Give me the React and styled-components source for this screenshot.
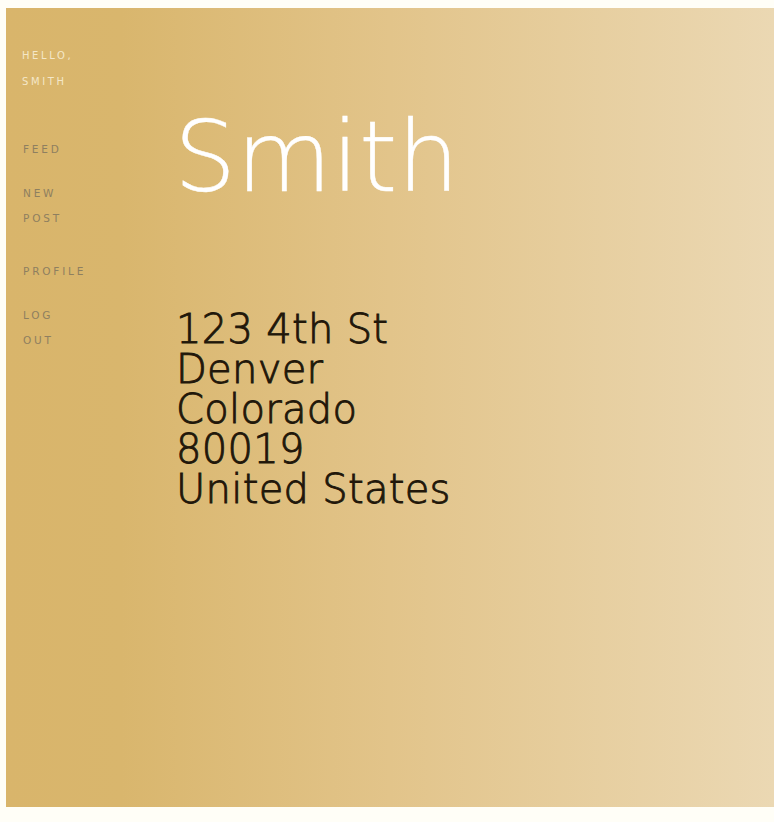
import React from "react";
import styled, { createGlobalStyle } from "styled-components";

const Global = createGlobalStyle`
  html, body { margin: 0; padding: 0; background: #fffef7; }
  body { padding: 8px 0 0 6px; font-family: "DejaVu Sans", "Liberation Sans", sans-serif; overflow: hidden; }
`;

const Page = styled.div`
  display: flex;
  height: 799px;
  background: linear-gradient(to right, #d9b56b 0%, #d9b66d 15%, #e2c48a 50%, #ebd8b3 100%);
`;

const Sidebar = styled.nav`
  width: 76px;
  flex: none;
  padding: 35px 0 0 16px;
  box-sizing: border-box;
  display: flex;
  flex-direction: column;
`;

const Greeting = styled.div`
  font-size: 10px;
  letter-spacing: 2.6px;
  line-height: 26px;
  color: #f4e7c8;
  margin-bottom: 42px;
`;

const NavItem = styled.a`
  display: block;
  font-size: 10.5px;
  letter-spacing: 2.8px;
  line-height: 25px;
  color: #8e7f60;
  text-decoration: none;
  margin-bottom: ${(p) => p.$gap ?? 19}px;
  padding-left: 1px;
`;

const Main = styled.main`
  padding: 90px 0 0 92px;
  display: flex;
  flex-direction: column;
`;

const Title = styled.h1`
  margin: 0;
  font-weight: 300;
  font-size: 98px;
  line-height: 118px;
  color: #ffffff;
  -webkit-text-stroke: 0.4px #ffffff;
`;

const Address = styled.div`
  margin: 93px 0 0 2px;
  font-size: 40px;
  line-height: 40px;
  letter-spacing: 0.3px;
  color: #21170a;
  font-weight: 300;
  -webkit-text-stroke: 0.9px #21170a;
`;

const Line = styled.div``;

export default function App() {
  return (
    <>
      <Global />
      <Page>
        <Sidebar>
          <Greeting>HELLO, SMITH</Greeting>
          <NavItem href="#">FEED</NavItem>
          <NavItem href="#" $gap={28}>NEW POST</NavItem>
          <NavItem href="#">PROFILE</NavItem>
          <NavItem href="#">LOG OUT</NavItem>
        </Sidebar>
        <Main>
          <Title>Smith</Title>
          <Address>
            <Line>123 4th St</Line>
            <Line>Denver</Line>
            <Line>Colorado</Line>
            <Line>80019</Line>
            <Line>United States</Line>
          </Address>
        </Main>
      </Page>
    </>
  );
}
